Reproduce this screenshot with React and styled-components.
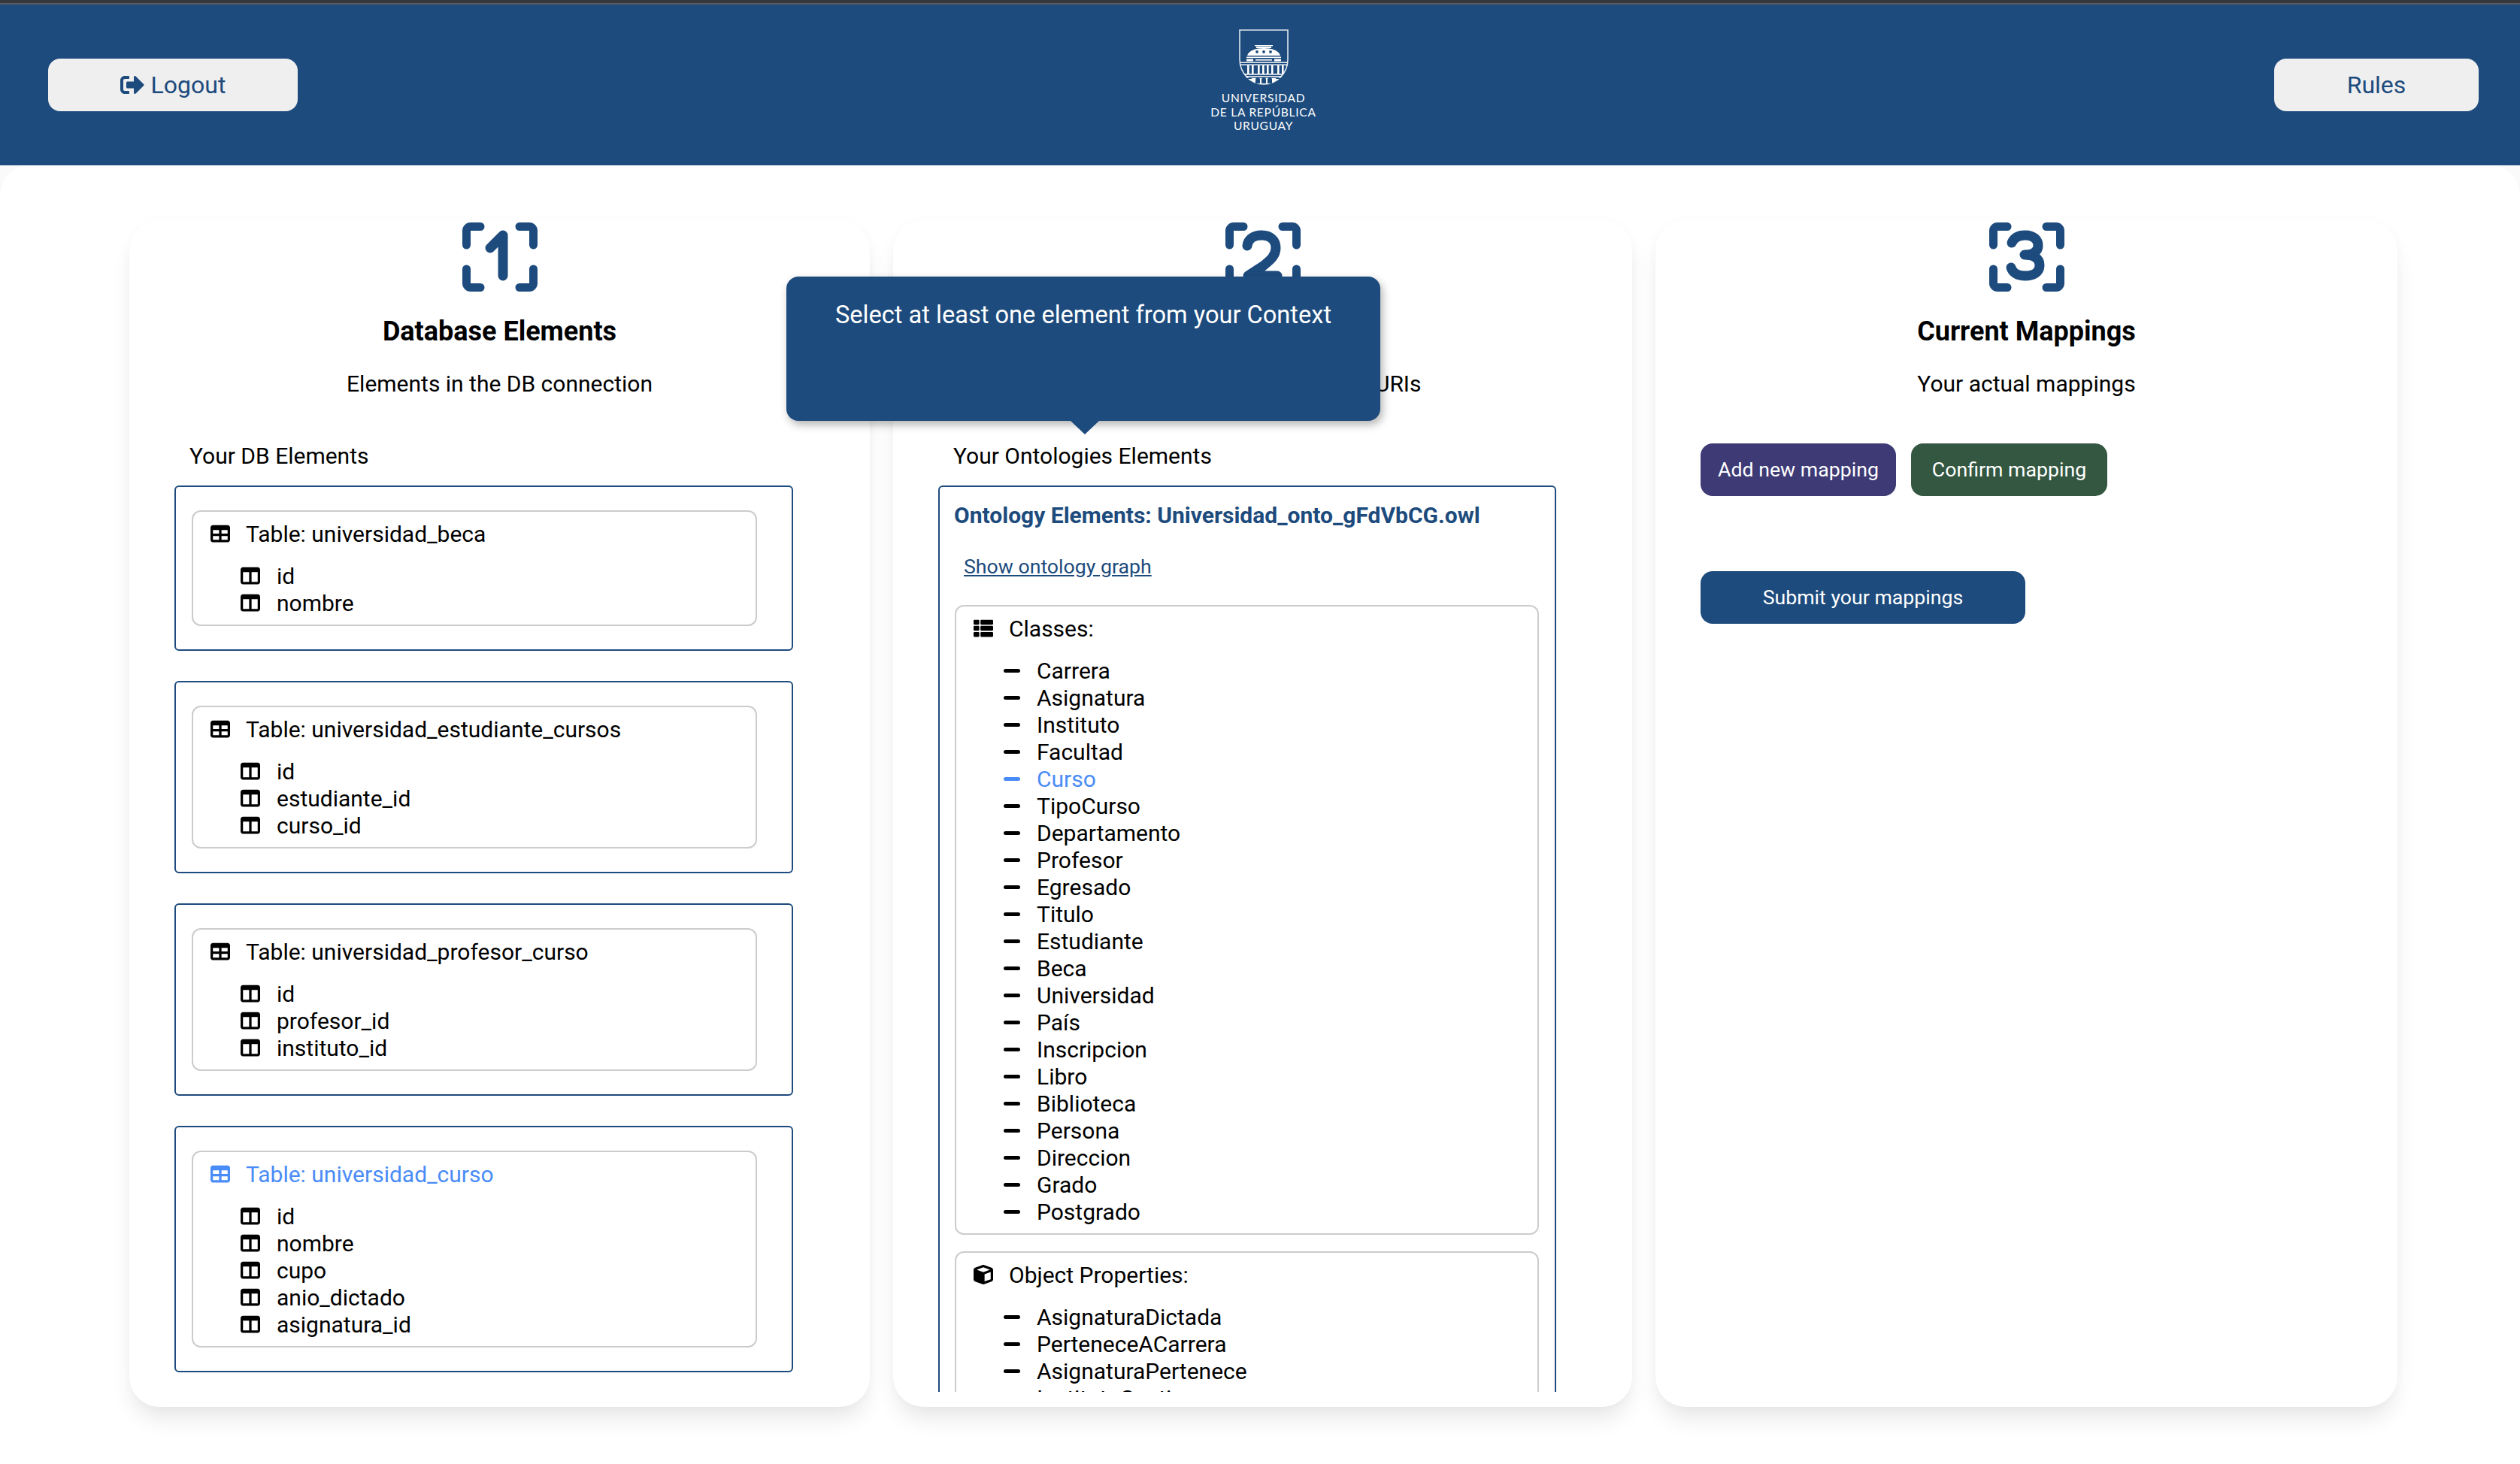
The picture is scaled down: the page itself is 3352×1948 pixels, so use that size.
import React from 'react';
import styled, { createGlobalStyle } from 'styled-components';
import { FaSignOutAlt, FaThList } from 'react-icons/fa';
import { FaTable, FaTableColumns, FaCube } from 'react-icons/fa6';

const BLUE = '#1d4b7d';
const HIGHLIGHT = '#4a8cf7';

const GlobalStyle = createGlobalStyle`
  * {
    box-sizing: border-box;
  }

  body {
    margin: 0;
    background: #fafafa;
    color: #000;
    font-family: Roboto, "Liberation Sans", sans-serif;
  }
`;

const Page = styled.div`
  width: 3352px;
  height: 1948px;
  overflow: hidden;
`;

const TopStrip = styled.div`
  height: 6px;
  background: #36383d;
  border-bottom: 2px solid #5b5d62;
`;

const Header = styled.header`
  height: 214px;
  padding: 0 55px 0 64px;
  display: grid;
  grid-template-columns: 1fr auto 1fr;
  align-items: center;
  background: ${BLUE};
`;

const HeaderButton = styled.button`
  width: ${props => props.$width}px;
  height: 70px;
  justify-self: ${props => props.$side};
  display: flex;
  align-items: center;
  justify-content: center;
  gap: 9px;
  border: none;
  border-radius: 16px;
  background: #efefef;
  color: ${BLUE};
  font-family: inherit;
  font-size: 32px;

  svg {
    font-size: 32px;
  }
`;

const Logo = styled.div`
  display: flex;
  flex-direction: column;
  align-items: center;
  margin-top: -10px;
`;

const LogoText = styled.div`
  margin-top: 8px;
  color: #fff;
  font-family: Lato, sans-serif;
  font-size: 15.5px;
  line-height: 18.5px;
  letter-spacing: 0.75px;
  text-align: center;
`;

const Main = styled.main`
  height: 1728px;
  padding: 73px 0 0 172px;
  display: flex;
  gap: 31px;
  align-items: flex-start;
  background: #fff;
  border-radius: 40px 40px 0 0;
`;

const Card = styled.section`
  position: relative;
  width: ${props => props.$width}px;
  height: 1579px;
  padding-top: 3px;
  background: #fff;
  border-radius: 40px;
  box-shadow: 0 20px 30px -6px rgba(0, 0, 0, 0.1), 0 0 16px rgba(0, 0, 0, 0.02);
`;

const CardHead = styled.div`
  display: flex;
  flex-direction: column;
  align-items: center;
`;

const CardTitle = styled.h2`
  margin: 31px 0 0;
  font-size: 36px;
  font-weight: 700;
  line-height: 44px;
`;

const CardSubtitle = styled.p`
  margin: 26px 0 0;
  font-size: 30px;
  line-height: 44px;
`;

const CardBody = styled.div`
  padding: 0 102px 0 60px;
`;

const SectionLabel = styled.div`
  margin: 56px 0 21px 20px;
  font-size: 30px;
  line-height: 36px;
`;

const TableStack = styled.div`
  display: flex;
  flex-direction: column;
  gap: 40px;
`;

const OuterBox = styled.div`
  padding: 31px 46px 31px 21px;
  border: 2px solid ${BLUE};
  border-radius: 6px;
`;

const InnerBox = styled.div`
  padding: 11px 0 11px 23px;
  border: 2px solid #cccccc;
  border-radius: 12px;
`;

const BoxTitle = styled.div`
  display: flex;
  align-items: center;
  gap: 21px;
  height: 36px;
  font-size: 30px;
  color: ${props => (props.$active ? HIGHLIGHT : '#000')};

  svg {
    flex: none;
    font-size: 26px;
  }
`;

const Rows = styled.ul`
  list-style: none;
  margin: 20px 0 0;
  padding: 0 0 0 40px;
`;

const Row = styled.li`
  display: flex;
  align-items: center;
  gap: 22px;
  height: 36px;
  font-size: 30px;
  color: ${props => (props.$active ? HIGHLIGHT : '#000')};

  svg {
    flex: none;
    font-size: 26px;
  }
`;

const Dash = styled.span`
  flex: none;
  width: 22px;
  height: 5px;
  border-radius: 3px;
  background: currentColor;
`;

const Viewport = styled.div`
  height: 1206px;
  margin-right: -1px;
  overflow: hidden;
`;

const OntologyBox = styled.div`
  padding: 17px 21px 20px 20px;
  border: 2px solid ${BLUE};
  border-radius: 6px;
  display: flex;
  flex-direction: column;
  gap: 22px;
`;

const OntologyTitle = styled.div`
  margin-left: -1px;
  font-size: 30px;
  font-weight: 700;
  line-height: 42px;
  color: ${BLUE};
`;

const GraphLink = styled.a`
  margin: 8px 0 12px 12px;
  font-size: 26.7px;
  line-height: 34px;
  color: ${BLUE};
  text-decoration: underline;
`;

const Tooltip = styled.div`
  position: absolute;
  z-index: 2;
  top: 75px;
  left: -142px;
  width: 790px;
  height: 192px;
  padding: 30px 20px 0;
  background: ${BLUE};
  border-radius: 16px;
  box-shadow: 3px 5px 12px rgba(0, 0, 0, 0.3);
  color: #fff;
  font-size: 32.6px;
  line-height: 42px;
  text-align: center;

  &::after {
    content: '';
    position: absolute;
    top: 100%;
    left: 50%;
    margin-left: -17px;
    border-style: solid;
    border-width: 18px 19px 0;
    border-color: ${BLUE} transparent transparent;
  }
`;

const ActionRow = styled.div`
  display: flex;
  gap: 20px;
  margin-top: 57px;
`;

const ActionButton = styled.button`
  width: ${props => props.$width}px;
  height: 70px;
  border: none;
  border-radius: 16px;
  background: ${props => props.$color};
  color: #fff;
  font-family: inherit;
  font-size: 26.7px;
`;

const SubmitRow = styled.div`
  margin-top: 100px;
`;

const StepIcon = ({ digit }) => {
  const digits = {
    1: 'M37 34L54 17V71',
    2: 'M29 31C30 22 38 17 48 17C60 17 67 24 67 34C67 44 60 50 50 58L30 71H69',
    3: 'M30 27C33 20 40 17 48 17C59 17 65 23 65 31C65 39 58 43 47 43C60 43 67 48 67 57C67 66 59 71 48 71C38 71 31 67 29 60',
  };

  return (
    <svg width="100" height="92" viewBox="0 0 100 92" fill="none" stroke={BLUE} strokeLinecap="round" strokeLinejoin="round">
      <g strokeWidth="11">
        <path d="M5.5 30V11A5.5 5.5 0 0 1 11 5.5H24" />
        <path d="M76 5.5H89A5.5 5.5 0 0 1 94.5 11V30" />
        <path d="M5.5 62V81A5.5 5.5 0 0 0 11 86.5H24" />
        <path d="M76 86.5H89A5.5 5.5 0 0 0 94.5 81V62" />
      </g>
      <path d={digits[digit]} strokeWidth="13" />
    </svg>
  );
};

const UdelarShield = () => (
  <svg width="66" height="74" viewBox="0 0 66 74" fill="none">
    <defs>
      <clipPath id="shield-clip">
        <path d="M1 1H65V40A32 33 0 0 1 1 40Z" />
      </clipPath>
    </defs>
    <path d="M1 1H65V40A32 33 0 0 1 1 40Z" stroke="#dfe6ee" strokeWidth="1.6" />
    <g clipPath="url(#shield-clip)" fill="#fff">
      <rect x="21" y="21" width="24" height="1.4" />
      <rect x="23" y="23" width="20" height="2" />
      <path d="M11 35C13 28 23 25 33 25C43 25 53 28 55 35Z" />
      <rect x="10" y="36.5" width="46" height="1.6" />
      <rect x="10" y="39.5" width="9" height="3" />
      <rect x="47" y="39.5" width="9" height="3" />
      <rect x="22" y="40" width="22" height="1.6" />
      <rect x="0" y="43.5" width="66" height="1.4" />
      <rect x="0" y="46.5" width="66" height="1.4" />
      {[11, 17, 25, 31, 37, 43, 51, 57].map(x => (
        <rect key={x} x={x} y="48" width="2.6" height="11" />
      ))}
      <rect x="0" y="59" width="66" height="1.6" />
      <rect x="0" y="62" width="66" height="1.2" />
      <rect x="0" y="64.6" width="66" height="10" />
    </g>
    <g fill={BLUE}>
      <circle cx="24" cy="30" r="1.9" />
      <circle cx="33" cy="30" r="1.9" />
      <circle cx="42" cy="30" r="1.9" />
      {[25, 33, 41].map(x => (
        <path key={x} d={`M${x - 3} 72V67A3 3 0 0 1 ${x + 3} 67V72Z`} />
      ))}
      <rect x="4" y="65" width="13" height="1" />
      <rect x="49" y="65" width="13" height="1" />
    </g>
  </svg>
);

const dbTables = [
  { name: 'universidad_beca', columns: ['id', 'nombre'] },
  { name: 'universidad_estudiante_cursos', columns: ['id', 'estudiante_id', 'curso_id'] },
  { name: 'universidad_profesor_curso', columns: ['id', 'profesor_id', 'instituto_id'] },
  { name: 'universidad_curso', columns: ['id', 'nombre', 'cupo', 'anio_dictado', 'asignatura_id'], active: true },
];

const classes = [
  'Carrera', 'Asignatura', 'Instituto', 'Facultad', 'Curso', 'TipoCurso', 'Departamento',
  'Profesor', 'Egresado', 'Titulo', 'Estudiante', 'Beca', 'Universidad', 'País', 'Inscripcion',
  'Libro', 'Biblioteca', 'Persona', 'Direccion', 'Grado', 'Postgrado',
];

const objectProperties = ['AsignaturaDictada', 'PerteneceACarrera', 'AsignaturaPertenece', 'InstitutoGestion'];

const App = () => (
  <Page>
    <GlobalStyle />
    <TopStrip />
    <Header>
      <HeaderButton $width={332} $side="start">
        <FaSignOutAlt />
        Logout
      </HeaderButton>
      <Logo>
        <UdelarShield />
        <LogoText>
          UNIVERSIDAD
          <br />
          DE LA REPÚBLICA
          <br />
          URUGUAY
        </LogoText>
      </Logo>
      <HeaderButton $width={272} $side="end">Rules</HeaderButton>
    </Header>

    <Main>
      <Card $width={985}>
        <CardHead>
          <StepIcon digit={1} />
          <CardTitle>Database Elements</CardTitle>
          <CardSubtitle>Elements in the DB connection</CardSubtitle>
        </CardHead>
        <CardBody>
          <SectionLabel>Your DB Elements</SectionLabel>
          <TableStack>
            {dbTables.map(table => (
              <OuterBox key={table.name}>
                <InnerBox>
                  <BoxTitle $active={table.active}>
                    <FaTable />
                    Table: {table.name}
                  </BoxTitle>
                  <Rows>
                    {table.columns.map(column => (
                      <Row key={column}>
                        <FaTableColumns />
                        {column}
                      </Row>
                    ))}
                  </Rows>
                </InnerBox>
              </OuterBox>
            ))}
          </TableStack>
        </CardBody>
      </Card>

      <Card $width={983}>
        <Tooltip>Select at least one element from your Context</Tooltip>
        <CardHead>
          <StepIcon digit={2} />
          <CardTitle>Ontology Terms</CardTitle>
          <CardSubtitle>Elements in the ontologies URIs</CardSubtitle>
        </CardHead>
        <CardBody>
          <SectionLabel>Your Ontologies Elements</SectionLabel>
          <Viewport>
            <OntologyBox>
              <OntologyTitle>Ontology Elements: Universidad_onto_gFdVbCG.owl</OntologyTitle>
              <GraphLink href="#">Show ontology graph</GraphLink>
              <InnerBox>
                <BoxTitle>
                  <FaThList />
                  Classes:
                </BoxTitle>
                <Rows>
                  {classes.map(name => (
                    <Row key={name} $active={name === 'Curso'}>
                      <Dash />
                      {name}
                    </Row>
                  ))}
                </Rows>
              </InnerBox>
              <InnerBox>
                <BoxTitle>
                  <FaCube />
                  Object Properties:
                </BoxTitle>
                <Rows>
                  {objectProperties.map(name => (
                    <Row key={name}>
                      <Dash />
                      {name}
                    </Row>
                  ))}
                </Rows>
              </InnerBox>
            </OntologyBox>
          </Viewport>
        </CardBody>
      </Card>

      <Card $width={987}>
        <CardHead>
          <StepIcon digit={3} />
          <CardTitle>Current Mappings</CardTitle>
          <CardSubtitle>Your actual mappings</CardSubtitle>
        </CardHead>
        <CardBody>
          <ActionRow>
            <ActionButton $width={260} $color="#3d3a75">Add new mapping</ActionButton>
            <ActionButton $width={261} $color="#335741">Confirm mapping</ActionButton>
          </ActionRow>
          <SubmitRow>
            <ActionButton $width={432} $color={BLUE}>Submit your mappings</ActionButton>
          </SubmitRow>
        </CardBody>
      </Card>
    </Main>
  </Page>
);

export default App;
